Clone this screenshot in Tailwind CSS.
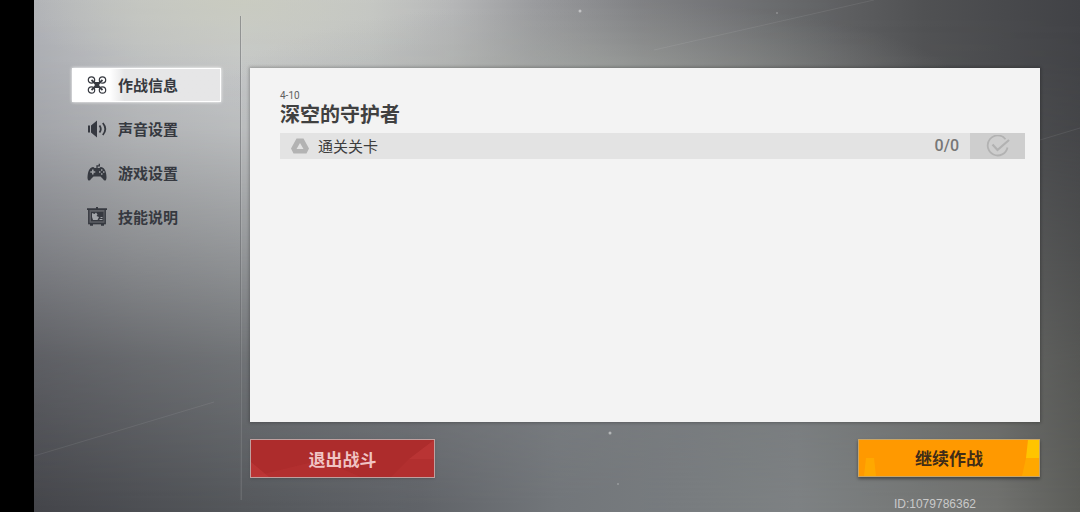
<!DOCTYPE html>
<html lang="zh-CN">
<head>
    <meta charset="UTF-8">
    <meta name="viewport" content="width=device-width, initial-scale=1.0">
    <title>作战信息</title>
    <script src="https://cdn.jsdelivr.net/npm/@tailwindcss/browser@4"></script>
</head>
<body class="flex min-h-screen bg-black font-['Noto_Sans_CJK_SC',sans-serif] text-[#363940]">
    <div class="w-[34px] shrink-0"></div>
    <div class="relative isolate flex flex-1">
        <!-- Metallic backdrop: bright top left corner fading down and to the right -->
        <svg class="absolute inset-0 -z-10 h-full w-full" viewBox="0 0 1046 512" preserveAspectRatio="none" aria-hidden="true">
            <defs>
                <linearGradient id="floor">
                    <stop offset="0" stop-color="#44454a"/>
                    <stop offset=".2" stop-color="#54575b"/>
                    <stop offset=".37" stop-color="#606368"/>
                    <stop offset=".5" stop-color="#72767a"/>
                    <stop offset=".73" stop-color="#7e8284"/>
                    <stop offset=".92" stop-color="#71726f"/>
                    <stop offset="1" stop-color="#5d5e5a"/>
                </linearGradient>
                <linearGradient id="ceiling">
                    <stop offset="0" stop-color="#b0b2b7"/>
                    <stop offset=".1" stop-color="#c1c3c5"/>
                    <stop offset=".2" stop-color="#cacccd"/>
                    <stop offset=".32" stop-color="#c4c6c6"/>
                    <stop offset=".4" stop-color="#b6b7b8"/>
                    <stop offset=".48" stop-color="#9a9b9e"/>
                    <stop offset=".58" stop-color="#808184"/>
                    <stop offset=".72" stop-color="#68696b"/>
                    <stop offset=".85" stop-color="#505153"/>
                    <stop offset="1" stop-color="#414246"/>
                </linearGradient>
                <linearGradient id="fall" x2="0" y2="1">
                    <stop offset="0" stop-color="#fff"/>
                    <stop offset=".12" stop-color="#fff" stop-opacity=".96"/>
                    <stop offset=".25" stop-color="#fff" stop-opacity=".87"/>
                    <stop offset=".47" stop-color="#fff" stop-opacity=".57"/>
                    <stop offset=".7" stop-color="#fff" stop-opacity=".24"/>
                    <stop offset="1" stop-color="#fff" stop-opacity="0"/>
                </linearGradient>
                <radialGradient id="haze">
                    <stop offset="0" stop-color="#b4b9af" stop-opacity=".55"/>
                    <stop offset="1" stop-color="#a5a8a2" stop-opacity="0"/>
                </radialGradient>
                <radialGradient id="warm">
                    <stop offset="0" stop-color="#c9cbbd" stop-opacity=".8"/>
                    <stop offset="1" stop-color="#c9cbbd" stop-opacity="0"/>
                </radialGradient>
                <mask id="fade"><rect width="1046" height="512" fill="url(#fall)"/></mask>
            </defs>
            <rect width="1046" height="512" fill="url(#floor)"/>
            <rect width="1046" height="512" fill="url(#ceiling)" mask="url(#fade)"/>
            <ellipse cx="200" cy="0" rx="220" ry="80" fill="url(#warm)"/>
            <ellipse cx="560" cy="90" rx="370" ry="90" fill="url(#haze)"/>
            <path d="M0 456L180 402M620 50L840 0M1006 140L1046 128" stroke="#fff" stroke-opacity=".08" fill="none"/>
            <g fill="#fff" fill-opacity=".45">
                <circle cx="546" cy="11" r="1.5"/>
                <circle cx="743" cy="13" r="1" fill-opacity=".25"/>
                <circle cx="576" cy="433" r="1.5"/>
                <circle cx="584" cy="484" r="1" fill-opacity=".25"/>
            </g>
        </svg>

        <nav class="flex w-[206px] shrink-0 flex-col gap-[10px] pt-[68px] pr-[19px] pl-[38px] text-[15px] leading-5 font-bold">
            <button class="flex h-[34px] items-center gap-[11px] border border-white bg-linear-to-r from-white from-25% to-[#e6e6e7] to-35% pl-[14px] shadow-[0_0_3px_#fff]">
                <svg class="size-5" viewBox="0 0 20 20" fill="none" stroke="currentColor" aria-hidden="true">
                    <g stroke-width="1.2">
                        <circle cx="4.5" cy="5" r="3.2"/>
                        <circle cx="15.5" cy="5" r="3.2"/>
                        <circle cx="4.5" cy="15" r="3.2"/>
                        <circle cx="15.5" cy="15" r="3.2"/>
                    </g>
                    <path d="M4.5 5L10 10L15.5 5M4.5 15L10 10L15.5 15" stroke-width="1.8"/>
                    <path d="M7 7h6l-.8 3 .8 3H7l.8-3z" fill="currentColor" stroke="none"/>
                </svg>
                作战信息
            </button>
            <button class="flex h-[34px] items-center gap-[11px] pl-[15px]">
                <svg class="size-5" viewBox="0 0 20 20" fill="currentColor" aria-hidden="true">
                    <path d="M1 6.5h2v7H1zM4 6.500L10 1.500v17L4 13.500z"/>
                    <path d="M12.500 6.500q2.600 3.500 0 7M15.800 4q5 6 0 12" fill="none" stroke="currentColor" stroke-width="1.8"/>
                </svg>
                声音设置
            </button>
            <button class="flex h-[34px] items-center gap-[11px] pl-[15px]">
                <svg class="size-5" viewBox="0 0 20 20" fill="currentColor" aria-hidden="true">
                    <path d="M10 5V2.800h2.300V.8" fill="none" stroke="currentColor" stroke-width="1.3"/>
                    <path fill-rule="evenodd" d="M4.500 4.500Q6.500 3.500 7.500 5h5Q13.500 3.500 15.500 4.500Q18 5.500 19 10Q20 15 19 17Q17.500 18.500 16 16L13.500 13.500h-7L4 16Q2.500 18.500 1 17Q0 15 1 10Q2 5.500 4.500 4.500zM5 6.500v1.700H3.300v1.600H5v1.700h1.600V9.800h1.700V8.200H6.600V6.500zM14 6.200v1.500h1.500V6.200zM14 10.300v1.500h1.500v-1.500zM12 8.200v1.500h1.500V8.200zM16 8.200v1.500h1.500V8.200z"/>
                </svg>
                游戏设置
            </button>
            <button class="flex h-[34px] items-center gap-[11px] pl-[15px]">
                <svg class="size-5" viewBox="0 0 20 20" fill="currentColor" aria-hidden="true">
                    <path d="M9 0h2v2H9zM0 1.300h20v1.700H0zM3 17h3v1.700H3zM14 17h3v1.700h-3z"/>
                    <path d="M1.200 3h17.600v14.200H1.200z" fill-opacity=".55"/>
                    <path d="M1.800 3v13.500h16.400V3" fill="none" stroke="currentColor" stroke-width="1.3"/>
                    <path d="M4 4.800h12.500v9.500H4z"/>
                    <path d="M5 6l2.500 1L9 5.500l1.500 2L9.500 9l2.500 1-1.500 3H6L5 10z" fill="#a2a5a9"/>
                    <path d="M12.500 12.500h3M13.500 10.500h2" stroke="#a2a5a9"/>
                </svg>
                技能说明
            </button>
        </nav>

        <div class="mt-4 mb-3 w-[2px] shrink-0 border-l border-[#55585b]/50 bg-white/10"></div>

        <main class="ml-2 flex flex-1 flex-col pt-[68px] pr-10">
            <section class="flex-1 bg-[#f3f3f3] pt-[22px] pr-[15px] pl-[30px] shadow-[0_0_3px_1px_#00000040]">
                <p class="font-[Roboto,sans-serif] text-[10px] leading-3 text-[#606060]">4-10</p>
                <h1 class="text-[20px] leading-6 font-bold text-[#404040]">深空的守护者</h1>
                <div class="mt-[7px] flex h-[26px] items-center bg-[#e3e3e3] pl-[11px] text-[15px] text-[#3d3d3d]">
                    <svg class="mr-[9px] h-4 w-[18px]" viewBox="0 0 18 16" aria-hidden="true">
                        <path fill="#b3b3b3" fill-rule="evenodd" d="M5.500.5h7L18 10.500L15.500 15.500h-13L0 10.500zM9 5l-3.500 6h7z"/>
                    </svg>
                    通关关卡
                    <span class="mr-[11px] ml-auto font-[Roboto,sans-serif] text-[16px] font-medium text-[#777777]">0/0</span>
                    <div class="flex h-full w-[55px] items-center justify-center bg-[#cecece]">
                        <svg class="h-[22px] w-6" viewBox="0 0 24 22" fill="none" stroke="#b2b2b2" stroke-width="1.8" aria-hidden="true">
                            <path d="M19.500 4.200A10 10 0 1 0 21.500 12.500"/>
                            <path d="M6.500 9.500l5 5.500L23 5" stroke-width="2.2"/>
                        </svg>
                    </div>
                </div>
            </section>

            <div class="mt-[17px] flex items-start justify-between text-[17px] leading-6 font-bold">
                <button class="relative h-[39px] w-[185px] border border-[#c0a09f] bg-[#ad2c2c] text-[#f0c4c4] shadow-sm">
                    <svg class="absolute inset-0 h-full w-full" viewBox="0 0 183 37" preserveAspectRatio="none" aria-hidden="true">
                        <path d="M183 0L158 19H183zM0 0V22L18 37H0z" fill="#d04444" fill-opacity=".35"/>
                        <path d="M158 19L140 37H183V19zM0 37L70 20L110 37z" fill="#d04444" fill-opacity=".15"/>
                    </svg>
                    <span class="relative">退出战斗</span>
                </button>
                <button class="relative h-[38px] w-[182px] border border-[#c9a668] bg-[#ff9900] text-[#3f2c17] shadow-[0_2px_3px_#00000066]">
                    <svg class="absolute inset-0 h-full w-full" viewBox="0 0 180 36" preserveAspectRatio="none" aria-hidden="true">
                        <path d="M169 0H180V18H167z" fill="#ffc400"/>
                        <path d="M167 18H180V36H163zM7 18H15L17 36H5z" fill="#ffb300" fill-opacity=".6"/>
                    </svg>
                    <span class="relative">继续作战</span>
                </button>
            </div>
            <p class="mt-[18px] mr-16 text-right font-['Liberation_Sans',sans-serif] text-[12px] leading-4 text-[#c9c9c9]">ID:1079786362</p>
        </main>
    </div>
</body>
</html>
